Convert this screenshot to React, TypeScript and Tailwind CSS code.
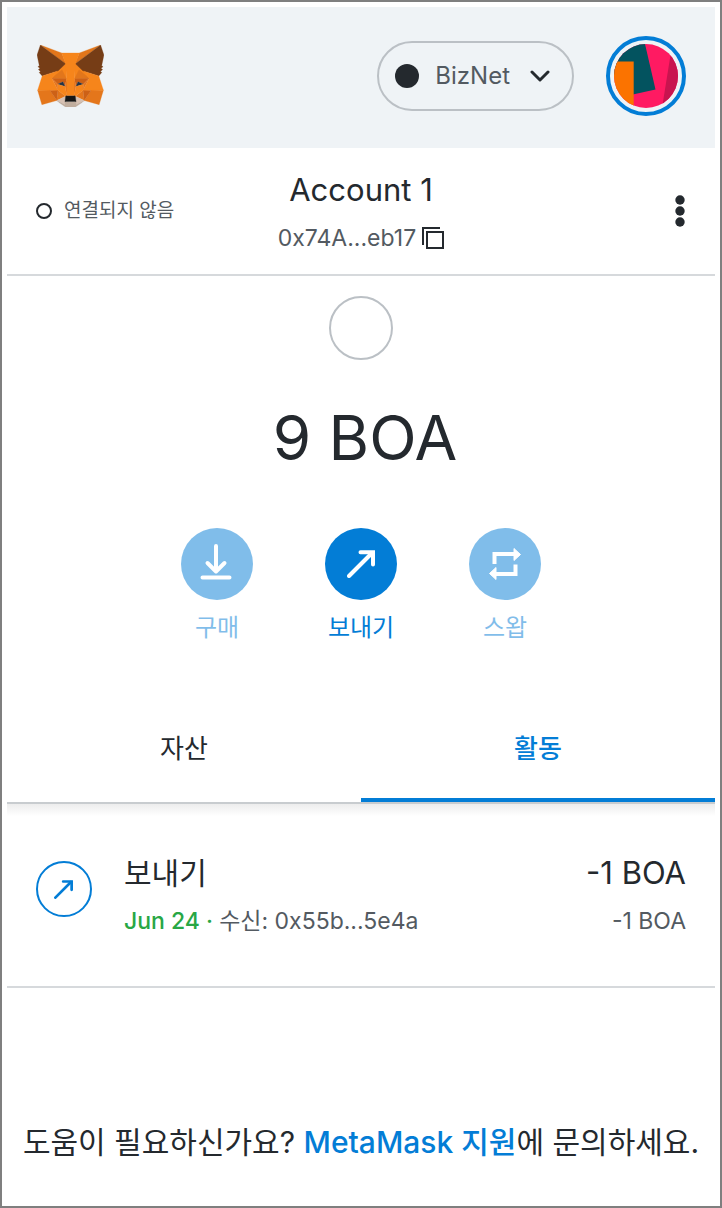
import type { ReactNode } from "react";

const foxShapes: [string, string][] = [
  ["#E2761B", "274.1,35.5 174.6,109.4 193,65.8"],
  ["#E2761B", "44.4,35.5 143.1,110.1 125.6,65.8"],
  ["#E4761B", "238.3,206.8 211.8,247.4 268.5,263 284.8,207.7"],
  ["#E4761B", "33.9,207.7 50.1,263 106.8,247.4 80.3,206.8"],
  ["#F6851B", "103.6,138.2 87.8,162.1 144.1,164.6 142.1,104.1"],
  ["#F6851B", "214.9,138.2 175.9,103.4 174.6,164.6 230.8,162.1"],
  ["#E2761B", "87.8,162.1 144.1,164.6 127,130"],
  ["#E2761B", "230.8,162.1 174.6,164.6 191.6,130"],
  ["#E4761B", "106.8,247.4 140.6,230.9 111.4,208.1"],
  ["#E4761B", "177.9,230.9 211.8,247.4 207.1,208.1"],
  ["#D7C1B3", "211.8,247.4 177.9,230.9 180.6,253 180.3,262.3"],
  ["#D7C1B3", "106.8,247.4 138.3,262.3 138.1,253 140.6,230.9"],
  ["#CD6116", "106.8,247.4 111.6,206.8 80.3,207.7"],
  ["#CD6116", "207,206.8 211.8,247.4 238.3,207.7"],
  ["#CD6116", "230.8,162.1 174.6,164.6 179.8,193.5 188.1,176.1 208.1,185.2"],
  ["#CD6116", "110.6,185.2 130.6,176.1 138.8,193.5 144.1,164.6 87.8,162.1"],
  ["#233447", "138.8,193.5 110.6,185.2 130.5,176.1"],
  ["#233447", "179.7,193.5 188,176.1 208,185.2"],
  ["#E4751F", "87.8,162.1 111.4,208.1 110.6,185.2"],
  ["#E4751F", "208.1,185.2 207.1,208.1 230.8,162.1"],
  ["#E4751F", "144.1,164.6 138.8,193.5 145.4,227.6 146.9,182.7"],
  ["#E4751F", "174.6,164.6 171.9,182.6 173.1,227.6 179.8,193.5"],
  ["#F6851B", "179.8,193.5 173.1,227.6 177.9,230.9 207.1,208.1 208.1,185.2"],
  ["#F6851B", "110.6,185.2 111.4,208.1 140.6,230.9 145.4,227.6 138.8,193.5"],
  ["#C0AD9E", "180.3,262.3 180.6,253 178.1,250.8 140.4,250.8 138.1,253 138.3,262.3 106.8,247.4 117.8,256.4 140.1,271.9 178.4,271.9 200.8,256.4 211.8,247.4"],
  ["#161616", "177.9,230.9 173.1,227.6 145.4,227.6 140.6,230.9 138.1,253 140.4,250.8 178.1,250.8 180.6,253"],
  ["#763D16", "278.3,114.2 286.8,73.4 274.1,35.5 177.9,106.9 206.9,134.2 267.2,153.5 278.8,140 273.8,136.4 281.8,129.1 275.6,124.3 283.6,118.2"],
  ["#763D16", "31.8,73.4 40.3,114.2 34.9,118.2 42.9,124.3 36.8,129.1 44.8,136.4 39.8,140 51.3,153.5 111.6,134.2 140.6,106.9 44.4,35.5"],
  ["#F6851B", "267.2,153.5 208,134.2 230.8,162.1 207.1,208.1 238.3,207.7 284.8,207.7"],
  ["#F6851B", "110.5,134.2 51.3,153.5 33.9,207.7 80.3,207.7 111.4,208.1 87.8,162.1"],
  ["#F6851B", "174.6,164.6 177.9,106.9 193.1,65.8 125.6,65.8 140.6,106.9 144.1,164.6 145.3,182.8 145.4,227.6 173.1,227.6 173.3,182.8"],
];

function Fox() {
  return (
    <svg viewBox="31.8 35.5 255 236.4" className="h-[62px] w-[67px]" aria-hidden="true">
      {foxShapes.map(([fill, points]) => (
        <polygon key={points} fill={fill} stroke={fill} strokeWidth="1" points={points} />
      ))}
    </svg>
  );
}

function Avatar() {
  return (
    <svg viewBox="0 0 64 64" className="size-16 rounded-full" aria-hidden="true">
      <rect width="64" height="64" fill="#FF1A62" />
      <path d="M57 8 48 64H64V8Z" fill="#C8144F" />
      <path d="M0 0H31L41.5 45.5 12 52 0 30Z" fill="#03535F" />
      <path d="M0 17.5H19.7V64H0Z" fill="#FB7300" />
    </svg>
  );
}

function SendArrow({ className }: { className: string }) {
  return (
    <svg
      viewBox="0 0 28 28"
      className={className}
      fill="none"
      stroke="currentColor"
      strokeWidth="4"
      strokeLinecap="round"
      aria-hidden="true"
    >
      <path d="M2 26 25 3" />
      <path d="M13.5 2.2H26V14.5" />
    </svg>
  );
}

function DownloadIcon() {
  return (
    <svg
      viewBox="0 0 32 36"
      className="mr-[2px] mb-1 h-9 w-8"
      fill="none"
      stroke="white"
      strokeWidth="4"
      strokeLinecap="round"
      strokeLinejoin="round"
      aria-hidden="true"
    >
      <path d="M16 2V27M7.5 19 16 27.5 24.5 19M2.5 33.5H29.5" />
    </svg>
  );
}

function SwapIcon() {
  return (
    <svg viewBox="0 0 32 34" className="h-[34px] w-8" aria-hidden="true">
      <path d="M5.5 17V7H26" fill="none" stroke="white" strokeWidth="4" />
      <path d="M26.5 17.5V27H6" fill="none" stroke="white" strokeWidth="4" />
      <path
        d="M25 1.5 31.5 7.5 25 13.5ZM7 20.5V32.5L.5 26.5Z"
        fill="white"
        stroke="white"
        strokeWidth="1"
        strokeLinejoin="round"
      />
    </svg>
  );
}

function Action({ label, disabled, children }: { label: string; disabled?: boolean; children: ReactNode }) {
  return (
    <button
      type="button"
      disabled={disabled}
      className="flex w-[72px] flex-col items-center gap-2 text-2xl leading-10 whitespace-nowrap text-[#037dd6] disabled:opacity-50"
    >
      <span className="flex size-[72px] items-center justify-center rounded-full bg-[#037dd6] text-white">
        {children}
      </span>
      {label}
    </button>
  );
}

export default function App() {
  return (
    <div className="min-h-screen border-2 border-[#7f7f7f] bg-white p-[5px] font-['Inter','Noto_Sans_CJK_KR',sans-serif] text-[#24292e]">
      <header className="flex h-[141px] items-center justify-between bg-[#eff3f6] pr-[29px] pb-1 pl-[30px]">
        <Fox />
        <div className="flex items-center gap-8">
          <button
            type="button"
            className="flex h-[70px] items-center rounded-full border-2 border-[#bbc0c5] px-4 text-2xl text-[#535a61]"
          >
            <span className="mr-4 size-6 rounded-full bg-[#24292e]" />
            BizNet
            <svg
              viewBox="0 0 20 12"
              className="mr-[6px] ml-5 h-3 w-5"
              fill="none"
              stroke="#24292e"
              strokeWidth="3"
              strokeLinecap="round"
              strokeLinejoin="round"
              aria-hidden="true"
            >
              <path d="M2 2 10 10 18 2" />
            </svg>
          </button>
          <button type="button" aria-label="내 계정" className="rounded-full border-4 border-[#037dd6] p-1">
            <Avatar />
          </button>
        </div>
      </header>

      <section className="grid h-32 grid-cols-[1fr_auto_1fr] items-center border-b-2 border-[#d6d9dc] px-7">
        <div className="flex items-center gap-3 pl-px text-[19px] text-[#535a61]">
          <span className="size-4 rounded-full border-2 border-[#24292e]" />
          연결되지 않음
        </div>
        <button type="button" className="flex flex-col items-center pt-[6px]">
          <span className="text-[31px] leading-[48px]">Account 1</span>
          <span className="flex items-center gap-[6px] text-[23px] leading-[48px] text-[#535a61]">
            0x74A...eb17
            <svg viewBox="0 0 22 22" className="size-[22px]" fill="none" stroke="#24292e" strokeWidth="2" aria-hidden="true">
              <path d="M1 18V1H18" />
              <rect x="5" y="5" width="16" height="16" />
            </svg>
          </span>
        </button>
        <button type="button" aria-label="계정 옵션" className="justify-self-end pr-[2px]">
          <svg viewBox="0 0 10 32" className="h-8 w-[10px]" fill="#24292e" aria-hidden="true">
            <circle cx="5" cy="5" r="4.7" />
            <circle cx="5" cy="16" r="4.7" />
            <circle cx="5" cy="27" r="4.7" />
          </svg>
        </button>
      </section>

      <main>
        <div className="flex flex-col items-center pt-5">
          <span className="size-16 rounded-full border-2 border-[#bbc0c5]" />
          <h1 className="mt-10 pl-2 text-[62px] leading-[76px]">9 BOA</h1>
          <div className="mt-[52px] flex gap-[72px]">
            <Action label="구매" disabled>
              <DownloadIcon />
            </Action>
            <Action label="보내기">
              <SendArrow className="size-7" />
            </Action>
            <Action label="스왑" disabled>
              <SwapIcon />
            </Action>
          </div>
        </div>

        <div role="tablist" className="mt-11 grid grid-cols-2 border-b-2 border-[#c8cccf] text-[26px] leading-10">
          <button type="button" role="tab" aria-selected="false" className="h-[110px] border-b-4 border-transparent pt-2">
            자산
          </button>
          <button
            type="button"
            role="tab"
            aria-selected="true"
            className="h-[110px] border-b-4 border-[#037dd6] pt-2 font-medium text-[#037dd6]"
          >
            활동
          </button>
        </div>
        <div className="h-3 bg-linear-to-b from-[#ededed] to-white" />

        <article className="flex h-[172px] items-start gap-8 border-b-2 border-[#d6d9dc] px-[29px] pt-[33px]">
          <span className="mt-3 flex size-14 items-center justify-center rounded-full border-2 border-[#037dd6] text-[#037dd6]">
            <SendArrow className="mr-[2px] size-[19px]" />
          </span>
          <div className="flex-1">
            <h2 className="text-[30px] leading-[48px]">보내기</h2>
            <p className="text-[23px] leading-[48px] text-[#535a61]">
              <span className="font-medium text-[#28a745]">Jun 24 · </span>수신: 0x55b...5e4a
            </p>
          </div>
          <div className="text-right">
            <p className="text-[31px] leading-[48px]">-1 BOA</p>
            <p className="text-[23px] leading-[48px] text-[#535a61]">-1 BOA</p>
          </div>
        </article>

        <p className="pt-[130px] text-center text-[30px] leading-[48px]">
          도움이 필요하신가요?{" "}
          <a href="#support" className="font-medium text-[#037dd6]">
            MetaMask 지원
          </a>
          에 문의하세요.
        </p>
      </main>
    </div>
  );
}
